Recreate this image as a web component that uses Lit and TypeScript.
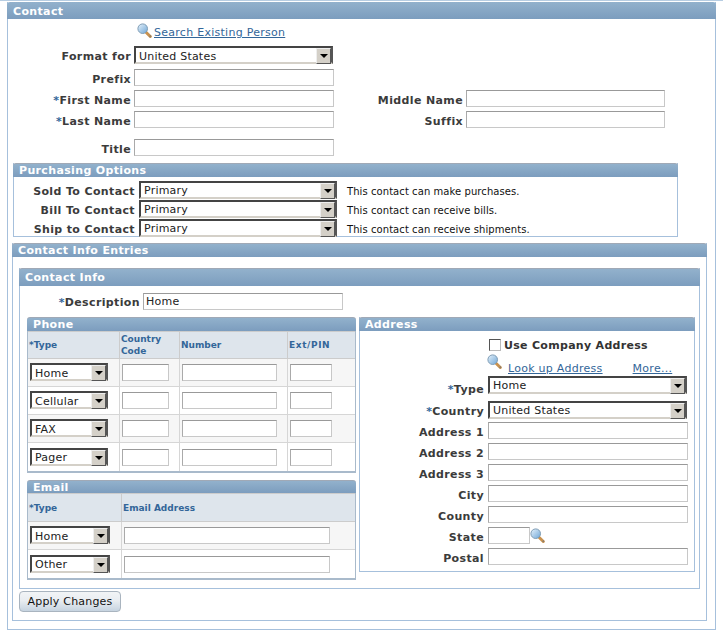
import { LitElement, html, css } from "lit";
import { customElement } from "lit/decorators.js";

const lens = () => html`<svg class="lens" viewBox="0 0 15 15" width="15" height="15">
  <defs><linearGradient id="lg" x1="0" y1="0" x2="1" y2="1"><stop offset="0" stop-color="#e6f2fb"/><stop offset="1" stop-color="#6fa6d6"/></linearGradient></defs>
  <path d="M9 9.2 L13.3 13.5" stroke="#c9924f" stroke-width="3" stroke-linecap="round"/>
  <path d="M12.6 13.8 L14 12.6" stroke="#777" stroke-width="1.2"/>
  <circle cx="5.7" cy="5.7" r="4.8" fill="url(#lg)" stroke="#7f9db5" stroke-width="1"/>
</svg>`;

const sel = (value: string, cls: string) => html`<div class="sel ${cls}">
  <select><option>${value}</option></select>
  <span class="btn"><i></i></span>
</div>`;

const req = (t: string) => html`<b class="star">*</b>${t}`;

@customElement("app-root")
export class AppRoot extends LitElement {
  static styles = css`
    :host { display: block; width: 723px; height: 636px; background: #fff; overflow: hidden;
      font: 11px "DejaVu Sans", Verdana, sans-serif; color: #333; border-top: 1px solid #b7cde2; box-sizing: border-box; }
    * { box-sizing: border-box; }
    .box { border: 1px solid #a6c0dc; border-top: 0; }
    .head { background: linear-gradient(#92b1cc, #7c9dbe); color: #fff; font-weight: bold; font-size: 11px; letter-spacing: .35px;
      border-radius: 3px 3px 0 0; margin: 0 -1px; display: flex; align-items: center; border-top: 1px solid #a0a9b6; }
    .outer { margin: 1px 7px 0; height: 628px; padding-bottom: 9px; }
    .outer > .head { height: 17px; padding-left: 6px; padding-top: 1px; border-top: 0; }
    .row { display: flex; align-items: center; height: 17px; }
    .lbl { text-align: right; font-weight: bold; padding-top: 3px; white-space: nowrap; color: #3b3b3b; letter-spacing: .37px; }
    .star { color: #336699; font-weight: bold; }
    input[type=text] { display: block; height: 17px; border: 1px solid #c8c8c8; border-top-color: #999; border-left-color: #aaa;
      background: #fff; padding: 0 2px; font: inherit; letter-spacing: .25px; color: #222; outline: none; margin: 0; }
    a { color: #336699; text-decoration: underline; letter-spacing: .27px; }
    .sel { position: relative; height: 18px; border: 2px solid #444; border-right-color: #555; border-bottom: 2px solid #d4d0c8; background: #fff; }
    .sel select { appearance: none; -webkit-appearance: none; border: 0; background: transparent; width: 100%; height: 15px; padding: 1px 0 0 3px;
      margin: 0; font: 11px "DejaVu Sans", Verdana, sans-serif; letter-spacing: .22px; color: #222; outline: none; display: block; line-height: 13px; }
    .btn { position: absolute; right: 0; top: 0; width: 15px; height: 16px; background: #d4d0c8;
      border: 1px solid #eee; border-right-color: #555; border-bottom-color: #555; display: flex; align-items: center; justify-content: center; }
    .btn i { display: block; width: 0; height: 0; border: 4px solid transparent; border-top: 4px solid #000; border-bottom: 0; }
    .lens { display: block; flex: none; }

    /* contact */
    .search { margin: 3px 0 0 129px; height: 16px; }
    .search a { margin-left: 2px; padding-top: 4px; }
    .fmt { margin-top: 8px; }
    .fmt select, td select { padding-top: 2px; }
    td .sel { margin-top: -1px; }
    .prefix { margin-top: 6px; }
    .gap4 { margin-top: 4px; }
    .gap8 { margin-top: 8px; }
    .gap11 { margin-top: 11px; }
    .l1 { width: 123px; margin-right: 3px; }
    .l2 { width: 129px; margin-right: 3px; }
    .w199 { width: 199px; } .w198 { width: 198px; } .w200 { width: 200px; }

    /* purchasing */
    .purch { margin: 7px 0 0 5px; width: 665px; }
    .purch .head { height: 14px; padding-left: 6px; }
    .pbody { padding-top: 4px; display: grid; row-gap: 2px; }
    .l3 { width: 121px; margin-right: 4px; }
    .note { margin-left: 10px; font-size: 10px; letter-spacing: .07px; color: #111; padding-top: 3px; white-space: nowrap; }

    /* entries */
    .entries { margin: 6px 0 0 4px; width: 695px; padding-bottom: 8px; }
    .entries > .head { height: 14px; padding-left: 6px; }
    .info { margin: 11px 0 0 6px; width: 681px; padding-bottom: 8px; }
    .info > .head { height: 18px; padding-left: 6px; }
    .l4 { width: 120px; margin-right: 3px; }
    .desc { margin-top: 7px; }
    .desc .lbl { padding-top: 1px; }
    .cols { display: flex; margin: 7px 0 0 7px; align-items: flex-start; }
    .left { width: 329px; margin-right: 3px; }
    .sub .head { height: 14px; padding-left: 6px; margin: 0; }
    table { border-collapse: separate; border-spacing: 0; table-layout: fixed; width: 329px;
      border-left: 1px solid #a9bacb; border-right: 1px solid #a9bacb; border-bottom: 2px solid #a9bacb; }
    th { background: #dee5ec; color: #336699; font-size: 9px; font-weight: bold; text-align: left; line-height: 12px; padding: 0 0 0 1px;
      border-right: 1px solid #ccc; border-bottom: 1px solid #ccc; border-top: 1px solid #ccc; }
    th.wide { letter-spacing: .6px; }
    td { padding: 0 0 0 2px; border-right: 1px solid #d6d6d6; border-bottom: 1px solid #d6d6d6; height: 28px; vertical-align: middle; }
    th:last-child, td:last-child { border-right: 0; }
    tr:last-child td { border-bottom: 0; }
    tr.odd td { background: #f6f6f6; }
    .phone th { height: 28px; }
    .email { margin-top: 7px; }
    .email th { height: 29px; }
    .email .head { height: 13px; }
    .w78 { width: 78px; } .w80 { width: 80px; } .w47 { width: 47px; } .w95 { width: 95px; } .w42 { width: 42px; } .w206 { width: 206px; }

    .addr { width: 336px; height: 255px; }
    .addr .head { margin: 0 -1px; height: 14px; padding-left: 6px; }
    .l5 { width: 124px; margin-right: 4px; }
    .chk { margin: 7px 0 0 129px; height: 13px; }
    .chk input { appearance: none; -webkit-appearance: none; margin: 0; width: 12px; height: 12px; border: 1px solid #bbb; border-top-color: #555; border-left-color: #555; background: #fff; }
    .chk span { margin-left: 3px; padding-top: 2px; font-weight: bold; color: #333; letter-spacing: .3px; }
    .look { margin: 3px 0 0 127px; height: 22px; align-items: flex-start; }
    .look .lens { margin-top: 0; }
    .look a { margin-top: 8px; }
    .look a.l { margin-left: 6px; }
    .look a.m { margin-left: 30px; }
    .typ .lbl { padding-top: 10px; }
    .apply { display: block; margin: 2px 0 0 6px; width: 102px; height: 21px; padding: 0; border: 1px solid #a9b4bf; border-radius: 4px;
      background: linear-gradient(#f2f4f6, #e9edf1 45%, #c6d3e0); font: 11px "DejaVu Sans", Verdana, sans-serif; letter-spacing: .2px; color: #111; }
  `;

  render() {
    const phones = ["Home", "Cellular", "FAX", "Pager"];
    const emails = ["Home", "Other"];
    const purch: [string, string][] = [
      ["Sold To Contact", "This contact can make purchases."],
      ["Bill To Contact", "This contact can receive bills."],
      ["Ship to Contact", "This contact can receive shipments."],
    ];
    return html`
      <div class="box outer">
        <div class="head">Contact</div>
        <div class="row search">${lens()}<a href="#">Search Existing Person</a></div>
        <div class="row fmt"><span class="lbl l1">Format for</span>${sel("United States", "w199")}</div>
        <div class="row prefix"><span class="lbl l1">Prefix</span><input type="text" class="w200" /></div>
        <div class="row gap4"><span class="lbl l1">${req("First Name")}</span><input type="text" class="w200" />
          <span class="lbl l2">Middle Name</span><input type="text" class="w199" /></div>
        <div class="row gap4"><span class="lbl l1">${req("Last Name")}</span><input type="text" class="w200" />
          <span class="lbl l2">Suffix</span><input type="text" class="w199" /></div>
        <div class="row gap11"><span class="lbl l1">Title</span><input type="text" class="w200" /></div>

        <div class="box purch">
          <div class="head">Purchasing Options</div>
          <div class="pbody">
            ${purch.map(([l, n]) => html`<div class="row"><span class="lbl l3">${l}</span>${sel("Primary", "w198")}<span class="note">${n}</span></div>`)}
          </div>
        </div>

        <div class="box entries">
          <div class="head">Contact Info Entries</div>
          <div class="box info">
            <div class="head">Contact Info</div>
            <div class="row desc"><span class="lbl l4">${req("Description")}</span><input type="text" class="w200" value="Home" /></div>
            <div class="cols">
              <div class="left">
                <div class="sub phone">
                  <div class="head">Phone</div>
                  <table>
                    <colgroup><col style="width:92px" /><col style="width:60px" /><col style="width:108px" /><col /></colgroup>
                    <tr><th><b class="star">*</b>Type</th><th>Country<br />Code</th><th>Number</th><th class="wide">Ext/PIN</th></tr>
                    ${phones.map((p, i) => html`<tr class=${i % 2 ? "" : "odd"}>
                      <td>${sel(p, "w78")}</td>
                      <td><input type="text" class="w47" /></td>
                      <td><input type="text" class="w95" /></td>
                      <td><input type="text" class="w42" /></td>
                    </tr>`)}
                  </table>
                </div>
                <div class="sub email">
                  <div class="head">Email</div>
                  <table>
                    <colgroup><col style="width:94px" /><col /></colgroup>
                    <tr><th><b class="star">*</b>Type</th><th>Email Address</th></tr>
                    ${emails.map((p, i) => html`<tr class=${i % 2 ? "" : "odd"}>
                      <td>${sel(p, "w80")}</td>
                      <td><input type="text" class="w206" /></td>
                    </tr>`)}
                  </table>
                </div>
              </div>
              <div class="box addr">
                <div class="head">Address</div>
                <div class="row chk"><input type="checkbox" /><span>Use Company Address</span></div>
                <div class="row look">${lens()}<a class="l" href="#">Look up Address</a><a class="m" href="#">More...</a></div>
                <div class="row typ"><span class="lbl l5">${req("Type")}</span>${sel("Home", "w199")}</div>
                <div class="row gap8"><span class="lbl l5">${req("Country")}</span>${sel("United States", "w199")}</div>
                ${["Address 1", "Address 2", "Address 3", "City", "County"].map(l => html`<div class="row gap4"><span class="lbl l5">${l}</span><input type="text" class="w200" /></div>`)}
                <div class="row gap4"><span class="lbl l5">State</span><input type="text" class="w42" />${lens()}</div>
                <div class="row gap4"><span class="lbl l5">Postal</span><input type="text" class="w200" /></div>
              </div>
            </div>
          </div>
          <button class="apply">Apply Changes</button>
        </div>
      </div>
    `;
  }
}
